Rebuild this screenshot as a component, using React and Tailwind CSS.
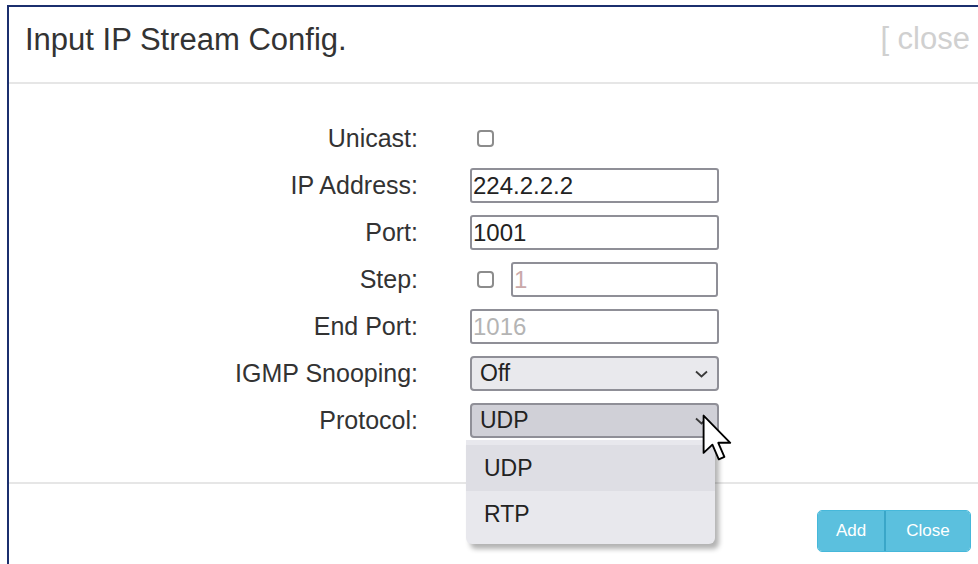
import React from 'react';

// Chevron used by the native-looking selects
const Chevron = () => (
    <svg width="13" height="8" viewBox="0 0 13 8" className="shrink-0">
        <path d="M1 1.5 L6.5 6.5 L12 1.5" fill="none" stroke="#3a3a3a" strokeWidth="1.8" />
    </svg>
);

// Standard arrow mouse pointer
const Pointer = () => (
    <svg width="32" height="48" viewBox="0 0 12 18">
        <path
            d="M0.6 0.6 L0.6 14.6 L3.9 11.5 L6.3 17 L8.4 16.1 L6.1 10.8 L10.6 10.8 Z"
            fill="#fff"
            stroke="#000"
            strokeWidth="0.7"
            strokeLinejoin="round"
        />
    </svg>
);

const Checkbox = () => (
    <span className="block h-[17px] w-[17px] rounded-[4px] border-2 border-[#8c8c8c] bg-white" />
);

const TextBox = ({ value, disabled, className = 'w-[249px]' }) => (
    <div
        className={`flex h-[35px] items-center rounded-[3px] border-2 border-[#8f8f97] bg-white pl-[1px] text-[24px] ${
            disabled ? 'text-[#b4b4b4]' : 'text-[#222]'
        } ${className}`}
    >
        {value}
    </div>
);

const SelectBox = ({ value, active }) => (
    <div
        className={`flex h-[35px] w-[249px] items-center justify-between rounded-[4px] border-2 border-[#8f8f97] pl-[8px] pr-[9px] text-[23px] text-[#222] ${
            active ? 'bg-[#d0d0d7]' : 'bg-[#e9e9ed]'
        }`}
    >
        <span>{value}</span>
        <Chevron />
    </div>
);

const Row = ({ label, children }) => (
    <div className="flex h-[35px] items-center">
        <div className="w-[409px] text-right text-[25px] text-[#333]">{label}</div>
        <div className="ml-[52px] flex items-center">{children}</div>
    </div>
);

export default function App() {
    return (
        <div className="h-[564px] w-[978px] overflow-hidden bg-white font-['Liberation_Sans',Arial,sans-serif]">
            <div className="ml-[7px] mt-[5px] w-[1000px] border-l-2 border-t-2 border-[#1b2f6e]">
                {/* header */}
                <div className="flex h-[77px] items-start justify-between border-b-2 border-[#e6e6e6] pl-[16px] pr-[37px] pt-[10px]">
                    <h1 className="text-[31px] text-[#333]">Input IP Stream Config.</h1>
                    <span className="mt-[4px] text-[31px] leading-[36px] text-[#d0d0d0]">[ close</span>
                </div>

                {/* form */}
                <div className="flex flex-col gap-[12px] pb-[44px] pt-[37px]">
                    <Row label="Unicast:">
                        <span className="ml-[7px]">
                            <Checkbox />
                        </span>
                    </Row>
                    <Row label="IP Address:">
                        <TextBox value="224.2.2.2" />
                    </Row>
                    <Row label="Port:">
                        <TextBox value="1001" />
                    </Row>
                    <Row label="Step:">
                        <span className="ml-[7px] mr-[17px]">
                            <Checkbox />
                        </span>
                        <TextBox value="1" disabled className="w-[207px] !text-[#caa9a9]" />
                    </Row>
                    <Row label="End Port:">
                        <TextBox value="1016" disabled />
                    </Row>
                    <Row label="IGMP Snooping:">
                        <SelectBox value="Off" />
                    </Row>
                    <Row label="Protocol:">
                        <div className="relative">
                            <SelectBox value="UDP" active />
                            <div className="absolute left-[-4px] top-full z-10 mt-[2px] w-[249px] rounded-b-[6px] bg-[#e8e8ed] pb-[7px] pt-[5px] text-[23px] text-[#222] shadow-[4px_5px_5px_rgba(0,0,0,0.3)]">
                                <div className="flex h-[46px] items-center bg-[#dedee4] pl-[18px]">UDP</div>
                                <div className="flex h-[46px] items-center pl-[18px]">RTP</div>
                            </div>
                            <div className="absolute left-[232px] top-[11px] z-20">
                                <Pointer />
                            </div>
                        </div>
                    </Row>
                </div>

                {/* footer */}
                <div className="flex h-[90px] items-start justify-end border-t-2 border-[#e6e6e6] pr-[36px] pt-[26px]">
                    <div className="flex h-[42px] overflow-hidden rounded-[5px] border border-[#46b8da] text-[17px] text-white">
                        <button className="w-[68px] border-r-2 border-[#3aa6c8] bg-[#5bc0de]">Add</button>
                        <button className="w-[84px] bg-[#5bc0de]">Close</button>
                    </div>
                </div>
            </div>
        </div>
    );
}
